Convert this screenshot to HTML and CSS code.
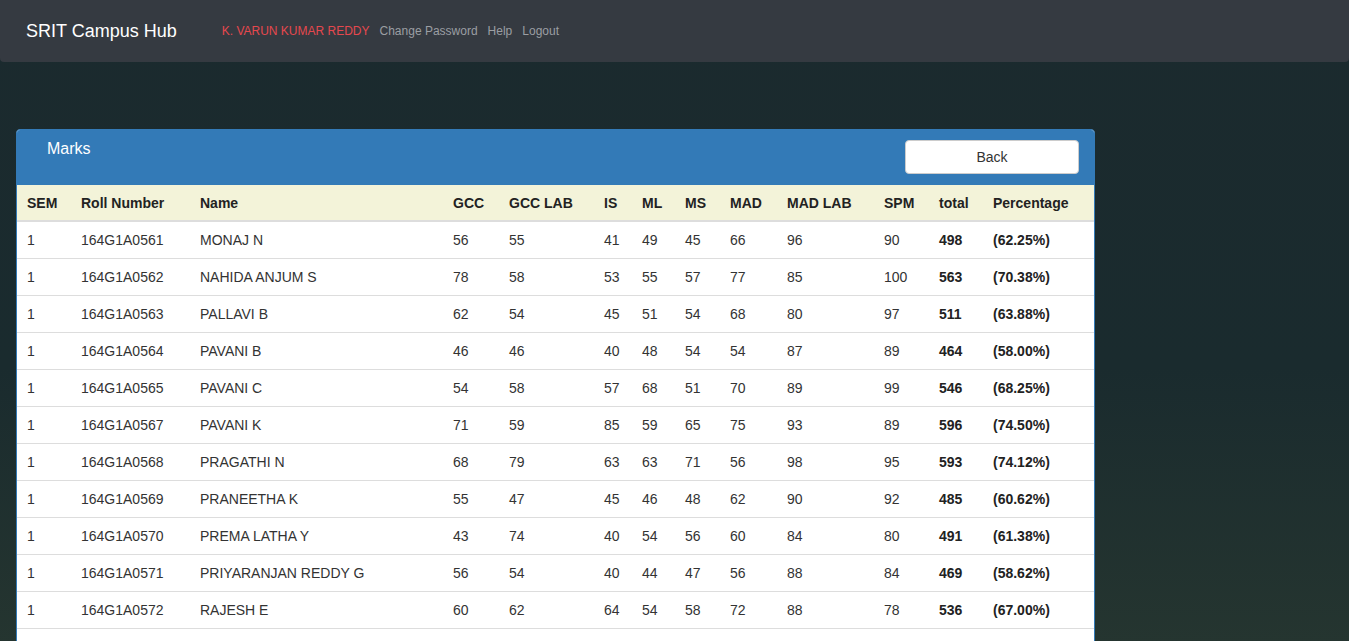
FILE: index.html
```html
<!DOCTYPE html>
<html lang="en">
<head>
<meta charset="utf-8">
<title>SRIT Campus Hub - Marks</title>
<link rel="stylesheet" href="styles.css">
</head>
<body>
<nav class="navbar">
  <a class="brand" href="#">SRIT Campus Hub</a>
  <ul class="nav-links">
    <li><a class="user" href="#">K. VARUN KUMAR REDDY</a></li>
    <li><a href="#">Change Password</a></li>
    <li><a href="#">Help</a></li>
    <li><a href="#">Logout</a></li>
  </ul>
</nav>
<main class="content">
  <section class="panel">
    <div class="panel-heading">
      <h3 class="panel-title">Marks</h3>
      <button class="btn-back" type="button">Back</button>
    </div>
    <table class="marks">
      <thead>
        <tr><th>SEM</th><th>Roll Number</th><th>Name</th><th>GCC</th><th>GCC LAB</th><th>IS</th><th>ML</th><th>MS</th><th>MAD</th><th>MAD LAB</th><th>SPM</th><th>total</th><th>Percentage</th></tr>
      </thead>
      <tbody>
        <tr><td>1</td><td>164G1A0561</td><td>MONAJ N</td><td>56</td><td>55</td><td>41</td><td>49</td><td>45</td><td>66</td><td>96</td><td>90</td><td class="b">498</td><td class="b">(62.25%)</td></tr>
        <tr><td>1</td><td>164G1A0562</td><td>NAHIDA ANJUM S</td><td>78</td><td>58</td><td>53</td><td>55</td><td>57</td><td>77</td><td>85</td><td>100</td><td class="b">563</td><td class="b">(70.38%)</td></tr>
        <tr><td>1</td><td>164G1A0563</td><td>PALLAVI B</td><td>62</td><td>54</td><td>45</td><td>51</td><td>54</td><td>68</td><td>80</td><td>97</td><td class="b">511</td><td class="b">(63.88%)</td></tr>
        <tr><td>1</td><td>164G1A0564</td><td>PAVANI B</td><td>46</td><td>46</td><td>40</td><td>48</td><td>54</td><td>54</td><td>87</td><td>89</td><td class="b">464</td><td class="b">(58.00%)</td></tr>
        <tr><td>1</td><td>164G1A0565</td><td>PAVANI C</td><td>54</td><td>58</td><td>57</td><td>68</td><td>51</td><td>70</td><td>89</td><td>99</td><td class="b">546</td><td class="b">(68.25%)</td></tr>
        <tr><td>1</td><td>164G1A0567</td><td>PAVANI K</td><td>71</td><td>59</td><td>85</td><td>59</td><td>65</td><td>75</td><td>93</td><td>89</td><td class="b">596</td><td class="b">(74.50%)</td></tr>
        <tr><td>1</td><td>164G1A0568</td><td>PRAGATHI N</td><td>68</td><td>79</td><td>63</td><td>63</td><td>71</td><td>56</td><td>98</td><td>95</td><td class="b">593</td><td class="b">(74.12%)</td></tr>
        <tr><td>1</td><td>164G1A0569</td><td>PRANEETHA K</td><td>55</td><td>47</td><td>45</td><td>46</td><td>48</td><td>62</td><td>90</td><td>92</td><td class="b">485</td><td class="b">(60.62%)</td></tr>
        <tr><td>1</td><td>164G1A0570</td><td>PREMA LATHA Y</td><td>43</td><td>74</td><td>40</td><td>54</td><td>56</td><td>60</td><td>84</td><td>80</td><td class="b">491</td><td class="b">(61.38%)</td></tr>
        <tr><td>1</td><td>164G1A0571</td><td>PRIYARANJAN REDDY G</td><td>56</td><td>54</td><td>40</td><td>44</td><td>47</td><td>56</td><td>88</td><td>84</td><td class="b">469</td><td class="b">(58.62%)</td></tr>
        <tr><td>1</td><td>164G1A0572</td><td>RAJESH E</td><td>60</td><td>62</td><td>64</td><td>54</td><td>58</td><td>72</td><td>88</td><td>78</td><td class="b">536</td><td class="b">(67.00%)</td></tr>
      </tbody>
    </table>
    <div class="panel-footer"></div>
  </section>
</main>
</body>
</html>
```

FILE: styles.css
```css
html, body {
  margin: 0;
  padding: 0;
}
body {
  font-family: "Liberation Sans", Arial, sans-serif;
  font-size: 14px;
  color: #333;
  min-height: 100vh;
  background: linear-gradient(180deg, #1b2a2e 0%, #1a2b2e 55%, #263630 100%);
}
.navbar {
  height: 62px;
  background: #353a41;
  border-radius: 0 0 4px 4px;
  display: flex;
  align-items: center;
  padding-left: 26px;
  box-sizing: border-box;
}
.brand {
  color: #fff;
  font-size: 18px;
  text-decoration: none;
  margin-right: 45px;
}
.nav-links {
  list-style: none;
  margin: 0;
  padding: 0;
  display: flex;
  gap: 10px;
  font-size: 12px;
}
.nav-links a {
  color: #9b9ea3;
  text-decoration: none;
}
.nav-links a.user {
  color: #e5484e;
}
.content {
  padding: 67px 16px 0;
}
.panel {
  width: 1079px;
  box-sizing: border-box;
  border: 1px solid #337ab7;
  border-radius: 4px;
  background: #fff;
  overflow: hidden;
}
.panel-heading {
  background: #337ab7;
  height: 55px;
  display: flex;
  justify-content: space-between;
  align-items: flex-start;
  padding: 0 15px 0 30px;
}
.panel-title {
  margin: 0;
  padding-top: 10px;
  font-size: 16px;
  font-weight: normal;
  color: #fff;
  line-height: 18px;
}
.btn-back {
  margin-top: 10px;
  width: 174px;
  height: 34px;
  background: #fff;
  border: 1px solid #ccc;
  border-radius: 4px;
  font-family: "Liberation Sans", Arial, sans-serif;
  font-size: 14px;
  color: #333;
  padding: 0;
}
.marks {
  width: 100%;
  border-collapse: collapse;
  table-layout: fixed;
}
.marks th, .marks td {
  padding: 8px 10px;
  line-height: 20px;
  text-align: left;
  white-space: nowrap;
}
.marks thead th {
  background: #f3f3d9;
  font-weight: bold;
  color: #222;
  border-bottom: 2px solid #ddd;
  padding-top: 8px;
  padding-bottom: 7px;
}
.marks td {
  border-bottom: 1px solid #ddd;
}
.marks td.b {
  font-weight: bold;
  color: #222;
}
.marks th:nth-child(1) { width: 34px; }
.marks th:nth-child(2) { width: 99px; }
.marks th:nth-child(3) { width: 233px; }
.marks th:nth-child(4) { width: 36px; }
.marks th:nth-child(5) { width: 75px; }
.marks th:nth-child(6) { width: 18px; }
.marks th:nth-child(7) { width: 23px; }
.marks th:nth-child(8) { width: 25px; }
.marks th:nth-child(9) { width: 37px; }
.marks th:nth-child(10) { width: 77px; }
.marks th:nth-child(11) { width: 35px; }
.marks th:nth-child(12) { width: 34px; }
.marks th:nth-child(13) { width: auto; }
.panel-footer {
  height: 40px;
  background: #fff;
}
```
